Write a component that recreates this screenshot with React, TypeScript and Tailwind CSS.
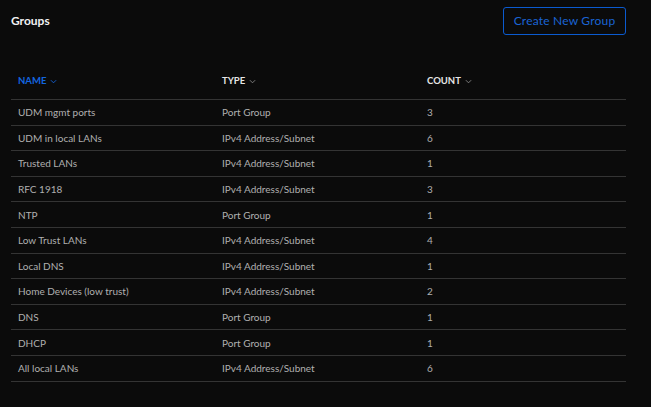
const rows: [string, string, number][] = [
  ["UDM mgmt ports", "Port Group", 3],
  ["UDM in local LANs", "IPv4 Address/Subnet", 6],
  ["Trusted LANs", "IPv4 Address/Subnet", 1],
  ["RFC 1918", "IPv4 Address/Subnet", 3],
  ["NTP", "Port Group", 1],
  ["Low Trust LANs", "IPv4 Address/Subnet", 4],
  ["Local DNS", "IPv4 Address/Subnet", 1],
  ["Home Devices (low trust)", "IPv4 Address/Subnet", 2],
  ["DNS", "Port Group", 1],
  ["DHCP", "Port Group", 1],
  ["All local LANs", "IPv4 Address/Subnet", 6],
];

function Chevron({ className }: { className: string }) {
  return (
    <svg viewBox="0 0 8 5" className={className} fill="none" stroke="currentColor" strokeWidth="1">
      <path d="M1 1l3 3 3-3" />
    </svg>
  );
}

export default function App() {
  return (
    <div className="h-[407px] w-[651px] overflow-hidden bg-[#0b0b0b] px-[11px] pr-[25px] font-['Lato',sans-serif]">
      <div className="flex h-[41px] items-center justify-between pt-[1px]">
        <h1 className="text-[12px] font-bold text-[#f2f2f2]">Groups</h1>
        <button className="h-[28px] w-[123px] rounded-[3px] border border-[#0b5bd0] text-[12px] tracking-[0.2px] text-[#1a64d4]">
          Create New Group
        </button>
      </div>
      <div className="mt-[22px] flex h-[37px] items-center border-b border-[#343434] pt-[1px] text-[9.5px] font-bold uppercase">
        <div className="flex w-[204px] items-center gap-[4px] pl-[7px] text-[#1366e0]">
          NAME <Chevron className="h-[5px] w-[7px]" />
        </div>
        <div className="flex w-[205px] items-center gap-[4px] pl-[7px] text-[#e6e6e6]">
          TYPE <Chevron className="h-[5px] w-[7px] text-[#8a8a8a]" />
        </div>
        <div className="flex items-center gap-[4px] pl-[7px] text-[#e6e6e6]">
          COUNT <Chevron className="h-[5px] w-[7px] text-[#8a8a8a]" />
        </div>
      </div>
      {rows.map(([name, type, count]) => (
        <div key={name} className="flex h-[25.6px] items-center border-b border-[#343434] pt-[1px] text-[10px] text-[#b0b0b0]">
          <div className="w-[204px] pl-[7px]">{name}</div>
          <div className="w-[205px] pl-[7px]">{type}</div>
          <div className="pl-[7px]">{count}</div>
        </div>
      ))}
    </div>
  );
}
